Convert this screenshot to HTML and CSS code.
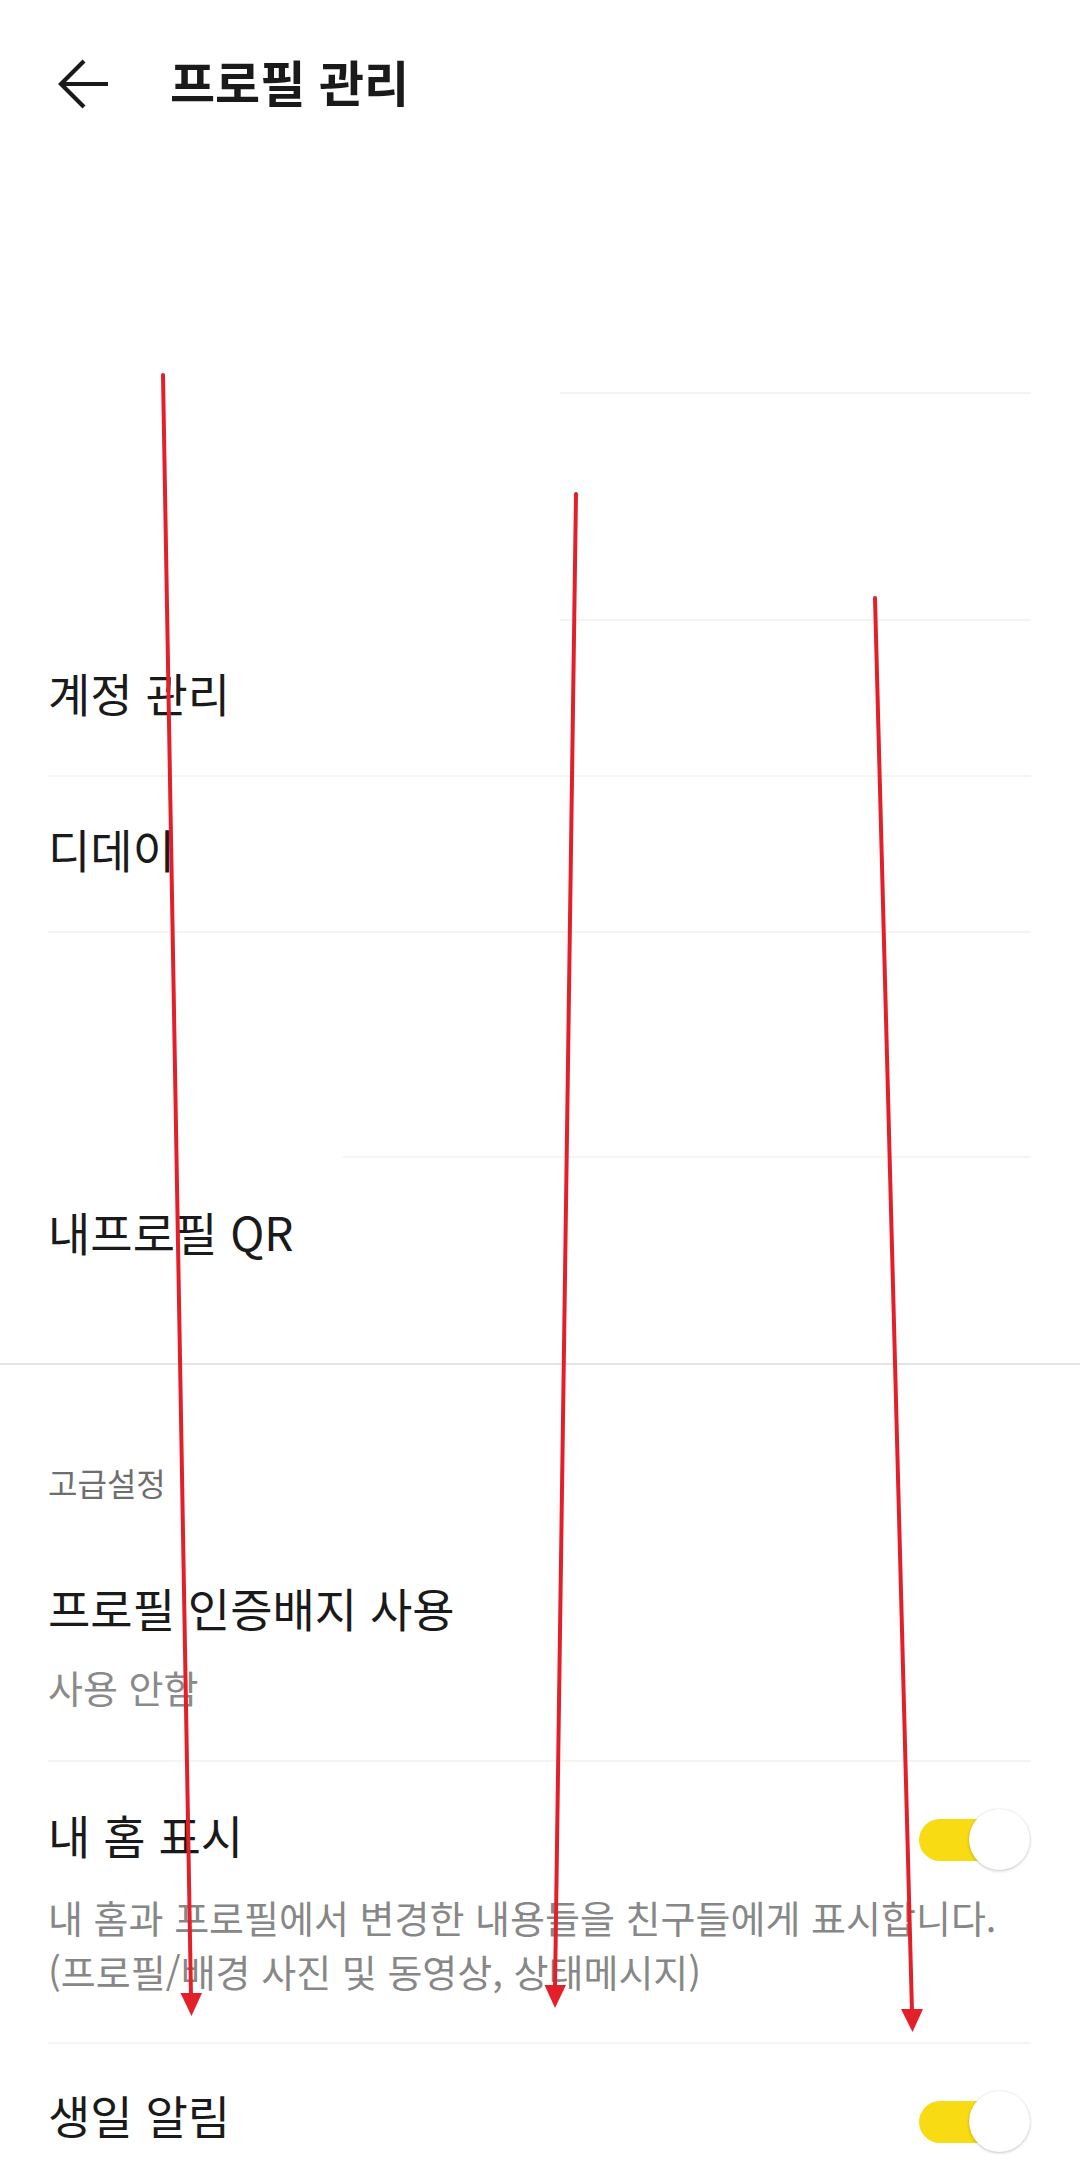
FILE: index.html
```html
<!DOCTYPE html>
<html lang="ko">
<head>
<meta charset="utf-8">
<title>프로필 관리</title>
<link rel="stylesheet" href="styles.css">
</head>
<body>
<div class="page">
  <header class="header">
    <svg class="back" viewBox="0 0 64 64" width="64" height="64" aria-hidden="true">
      <path d="M9 32 H56 M32 9 L9 32 L32 55" fill="none" stroke="#1a1a1a" stroke-width="4.2" stroke-linecap="butt" stroke-linejoin="miter"/>
    </svg>
    <h1 class="title">프로필 관리</h1>
  </header>

  <div class="row ghost ghost-a"></div>
  <div class="divider d-560"></div>
  <div class="row ghost ghost-b"></div>
  <div class="divider d-560"></div>
  <div class="row item"><span class="label">계정 관리</span></div>
  <div class="divider d-48"></div>
  <div class="row item"><span class="label">디데이</span></div>
  <div class="divider d-48"></div>
  <div class="row ghost ghost-c"></div>
  <div class="divider d-343"></div>
  <div class="row item qr"><span class="label">내프로필 QR</span></div>

  <div class="section-divider"></div>

  <div class="section-title">고급설정</div>

  <div class="setting badge">
    <div class="label">프로필 인증배지 사용</div>
    <div class="sub">사용 안함</div>
  </div>
  <div class="divider d-48"></div>

  <div class="setting home">
    <div class="setting-top">
      <div class="label">내 홈 표시</div>
      <div class="toggle"><span class="track"></span><span class="knob"></span></div>
    </div>
    <div class="desc">내 홈과 프로필에서 변경한 내용들을 친구들에게 표시합니다.<br>(프로필/배경 사진 및 동영상, 상태메시지)</div>
  </div>
  <div class="divider d-48"></div>

  <div class="setting birthday">
    <div class="setting-top">
      <div class="label">생일 알림</div>
      <div class="toggle"><span class="track"></span><span class="knob"></span></div>
    </div>
  </div>

  <svg class="annot" viewBox="0 0 1080 2168" width="1080" height="2168" aria-hidden="true">
    <g stroke="#e3202a" stroke-width="4" stroke-linecap="round" fill="none">
      <line x1="163" y1="375" x2="191" y2="1996"/>
      <line x1="576" y1="494" x2="555" y2="1988"/>
      <line x1="875" y1="598" x2="912" y2="2012"/>
    </g>
    <g fill="#e3202a">
      <polygon points="180.5,1993 202,1993 191.5,2016"/>
      <polygon points="544.5,1985 566,1985 555,2008"/>
      <polygon points="901,2009 923,2009 912.5,2032"/>
    </g>
  </svg>
</div>
</body>
</html>
```

FILE: styles.css
```css
html, body {
  margin: 0;
  padding: 0;
  background: #ffffff;
}

.page {
  position: relative;
  width: 1080px;
  height: 2168px;
  overflow: hidden;
  font-family: "Noto Sans CJK KR", "Noto Sans", sans-serif;
  color: #1a1a1a;
}

.header {
  display: flex;
  align-items: flex-start;
  height: 168px;
  padding-left: 52px;
  padding-top: 52px;
  box-sizing: border-box;
}

.back {
  display: block;
  flex: none;
}

.title {
  margin: 0 0 0 54px;
  font-size: 49px;
  font-weight: 700;
  line-height: 58px;
  letter-spacing: 0;
  color: #1a1a1a;
}

.row {
  display: flex;
  align-items: center;
  padding: 0 50px 0 48px;
}

.ghost-a { height: 224px; }
.ghost-b { height: 225px; }
.ghost-c { height: 223px; }

.item {
  height: 154px;
  box-sizing: border-box;
  padding-bottom: 12px;
}
.item.qr {
  height: 160px;
  padding-bottom: 14px;
}

.label {
  font-size: 46px;
  line-height: 60px;
  font-weight: 400;
  color: #1a1a1a;
}

.divider {
  height: 2px;
  background: #f4f4f4;
  margin-right: 49px;
}
.d-48 { margin-left: 48px; }
.d-343 { margin-left: 343px; }
.d-560 { margin-left: 560px; }

.section-divider {
  height: 2px;
  background: #e3e3e3;
  margin-top: 45px;
}

.section-title {
  padding: 97px 48px 32px;
  font-size: 32px;
  line-height: 40px;
  color: #6e6e6e;
}

.setting {
  padding: 43px 50px 43px 48px;
}
.setting.home {
  padding-top: 42px;
  padding-bottom: 44px;
}
.setting.birthday {
  padding-top: 40px;
}

.sub {
  margin-top: 20px;
  font-size: 38px;
  line-height: 60px;
  color: #8a8a8a;
}

.setting-top {
  display: flex;
  align-items: flex-start;
  justify-content: space-between;
}

.desc {
  margin-top: 20px;
  font-size: 38px;
  line-height: 54px;
  color: #878787;
}

.toggle {
  position: relative;
  width: 111px;
  height: 61px;
  flex: none;
  margin-top: 5px;
}
.birthday .toggle {
  margin-top: 7px;
}
.track {
  position: absolute;
  left: 0;
  top: 10px;
  width: 100px;
  height: 42px;
  border-radius: 21px;
  background: #f8db12;
}
.knob {
  position: absolute;
  right: 0;
  top: 0;
  width: 61px;
  height: 61px;
  border-radius: 50%;
  background: #ffffff;
  box-shadow: 0 1px 3px rgba(0, 0, 0, 0.22), 0 0 1px rgba(0, 0, 0, 0.12);
}

.annot {
  position: absolute;
  left: 0;
  top: 0;
  pointer-events: none;
}
```
